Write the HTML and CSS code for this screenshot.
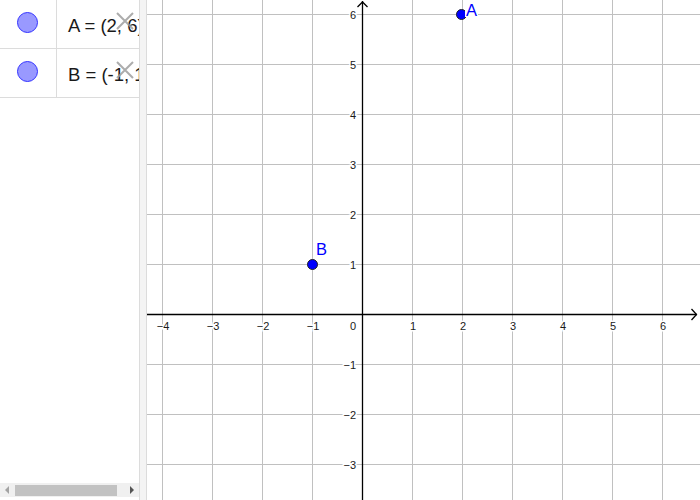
FILE: index.html
```html
<!DOCTYPE html>
<html>
<head>
<meta charset="utf-8">
<link rel="stylesheet" href="styles.css">
</head>
<body>
<div class="app">
  <div class="algebra">
    <div class="row">
      <div class="marble-cell"><span class="marble"></span></div>
      <div class="expr">A = (2, 6)</div>
      <svg class="del" width="18" height="18" viewBox="0 0 18 18"><path d="M1 1 L17 17 M17 1 L1 17" /></svg>
    </div>
    <div class="row">
      <div class="marble-cell"><span class="marble"></span></div>
      <div class="expr">B = (-1, 1)</div>
      <svg class="del" width="18" height="18" viewBox="0 0 18 18"><path d="M1 1 L17 17 M17 1 L1 17" /></svg>
    </div>
    <div class="hscroll">
      <span class="arrow-left"></span>
      <span class="thumb"></span>
      <span class="arrow-right"></span>
    </div>
  </div>
  <div class="divider"></div>
  <div class="graphics">
    <svg class="plot" width="553" height="500" viewBox="147 0 553 500">
      <g class="grid">
        <line x1="162.5" y1="0" x2="162.5" y2="500"/>
        <line x1="212.5" y1="0" x2="212.5" y2="500"/>
        <line x1="262.5" y1="0" x2="262.5" y2="500"/>
        <line x1="312.5" y1="0" x2="312.5" y2="500"/>
        <line x1="412.5" y1="0" x2="412.5" y2="500"/>
        <line x1="462.5" y1="0" x2="462.5" y2="500"/>
        <line x1="512.5" y1="0" x2="512.5" y2="500"/>
        <line x1="562.5" y1="0" x2="562.5" y2="500"/>
        <line x1="612.5" y1="0" x2="612.5" y2="500"/>
        <line x1="662.5" y1="0" x2="662.5" y2="500"/>
        <line x1="147" y1="14.5" x2="700" y2="14.5"/>
        <line x1="147" y1="64.5" x2="700" y2="64.5"/>
        <line x1="147" y1="114.5" x2="700" y2="114.5"/>
        <line x1="147" y1="164.5" x2="700" y2="164.5"/>
        <line x1="147" y1="214.5" x2="700" y2="214.5"/>
        <line x1="147" y1="264.5" x2="700" y2="264.5"/>
        <line x1="147" y1="364.5" x2="700" y2="364.5"/>
        <line x1="147" y1="414.5" x2="700" y2="414.5"/>
        <line x1="147" y1="464.5" x2="700" y2="464.5"/>
      </g>
      <g class="ticks">
        <text x="163" y="330">−4</text>
        <text x="213" y="330">−3</text>
        <text x="263" y="330">−2</text>
        <text x="313" y="330">−1</text>
        <text x="413" y="330">1</text>
        <text x="463" y="330">2</text>
        <text x="513" y="330">3</text>
        <text x="563" y="330">4</text>
        <text x="613" y="330">5</text>
        <text x="663" y="330">6</text>
      </g>
      <g class="ticks yt">
        <text x="356" y="19">6</text>
        <text x="356" y="69">5</text>
        <text x="356" y="119">4</text>
        <text x="356" y="169">3</text>
        <text x="356" y="219">2</text>
        <text x="356" y="269">1</text>
        <text x="356" y="330">0</text>
        <text x="356" y="369">−1</text>
        <text x="356" y="419">−2</text>
        <text x="356" y="469">−3</text>
      </g>
      <g class="axes">
        <line x1="147" y1="314.5" x2="697" y2="314.5"/>
        <line x1="362.5" y1="1" x2="362.5" y2="500"/>
        <path d="M357.5 7 L362.5 2 L367.5 7"/>
        <path d="M691.5 309 L696.5 314.5 L691.5 320"/>
      </g>
      <circle class="pt" cx="312.5" cy="264.5" r="5"/>
      <text class="plabel" x="316" y="255">B</text>
      <circle class="pt" cx="461.5" cy="14.5" r="5"/>
      <rect class="lblbg" x="465" y="2" width="13" height="15"/>
      <text class="plabel" x="466" y="16">A</text>
    </svg>
  </div>
</div>
</body>
</html>
```
FILE: styles.css
```css
* { box-sizing: border-box; }
html, body {
  margin: 0;
  padding: 0;
  background: #fff;
  font-family: "Liberation Sans", Arial, sans-serif;
}
.app {
  display: flex;
  width: 700px;
  height: 500px;
  overflow: hidden;
}
.algebra {
  width: 139px;
  flex: none;
  display: flex;
  flex-direction: column;
  background: #fff;
  overflow: hidden;
}
.row {
  position: relative;
  display: flex;
  height: 49px;
  flex: none;
  border-bottom: 1px solid #dcdcdc;
}
.marble-cell {
  width: 57px;
  flex: none;
  border-right: 1px solid #dcdcdc;
  display: flex;
  justify-content: center;
  padding-top: 12px;
  padding-right: 2px;
}
.marble {
  width: 21px;
  height: 21px;
  border-radius: 50%;
  background: #9999ff;
  border: 1px solid #3333ff;
}
.expr {
  padding-left: 11px;
  padding-top: 15px;
  font-size: 18.5px;
  color: #1a1a1a;
  white-space: nowrap;
}
.del {
  position: absolute;
  left: 116px;
  top: 12px;
}
.del path {
  stroke: #9e9e9e;
  stroke-width: 2;
  fill: none;
  opacity: 0.85;
}
.hscroll {
  margin-top: auto;
  margin-bottom: 3px;
  height: 14px;
  background: #f0f0f0;
  display: flex;
  align-items: center;
  padding: 0 5px;
}
.arrow-left {
  width: 0;
  height: 0;
  border-top: 4px solid transparent;
  border-bottom: 4px solid transparent;
  border-right: 4px solid #a3a3a3;
}
.thumb {
  width: 102px;
  height: 11px;
  margin-left: 6px;
  background: #c2c2c2;
}
.arrow-right {
  width: 0;
  height: 0;
  margin-left: auto;
  border-top: 4px solid transparent;
  border-bottom: 4px solid transparent;
  border-left: 4px solid #555;
}
.divider {
  width: 8px;
  flex: none;
  background: #f4f4f4;
  border-left: 1px solid #dcdcdc;
  border-right: 1px solid #dcdcdc;
}
.graphics {
  flex: 1;
  background: #fff;
}
.plot { display: block; }
.grid line {
  stroke: #c0c0c0;
  stroke-width: 1;
}
.axes line, .axes path {
  stroke: #000;
  stroke-width: 1.3;
  fill: none;
}
.ticks text {
  font-family: "Liberation Sans", Arial, sans-serif;
  font-size: 11px;
  fill: #1a1a1a;
  text-anchor: middle;
  stroke: #fff;
  stroke-width: 3px;
  paint-order: stroke;
}
.ticks.yt text { text-anchor: end; }
.pt {
  fill: #0000ff;
  stroke: #222;
  stroke-width: 1;
}
.plabel {
  font-family: "Liberation Sans", Arial, sans-serif;
  font-size: 16.5px;
  fill: #0000ff;
}
.lblbg { fill: #fff; }
```
